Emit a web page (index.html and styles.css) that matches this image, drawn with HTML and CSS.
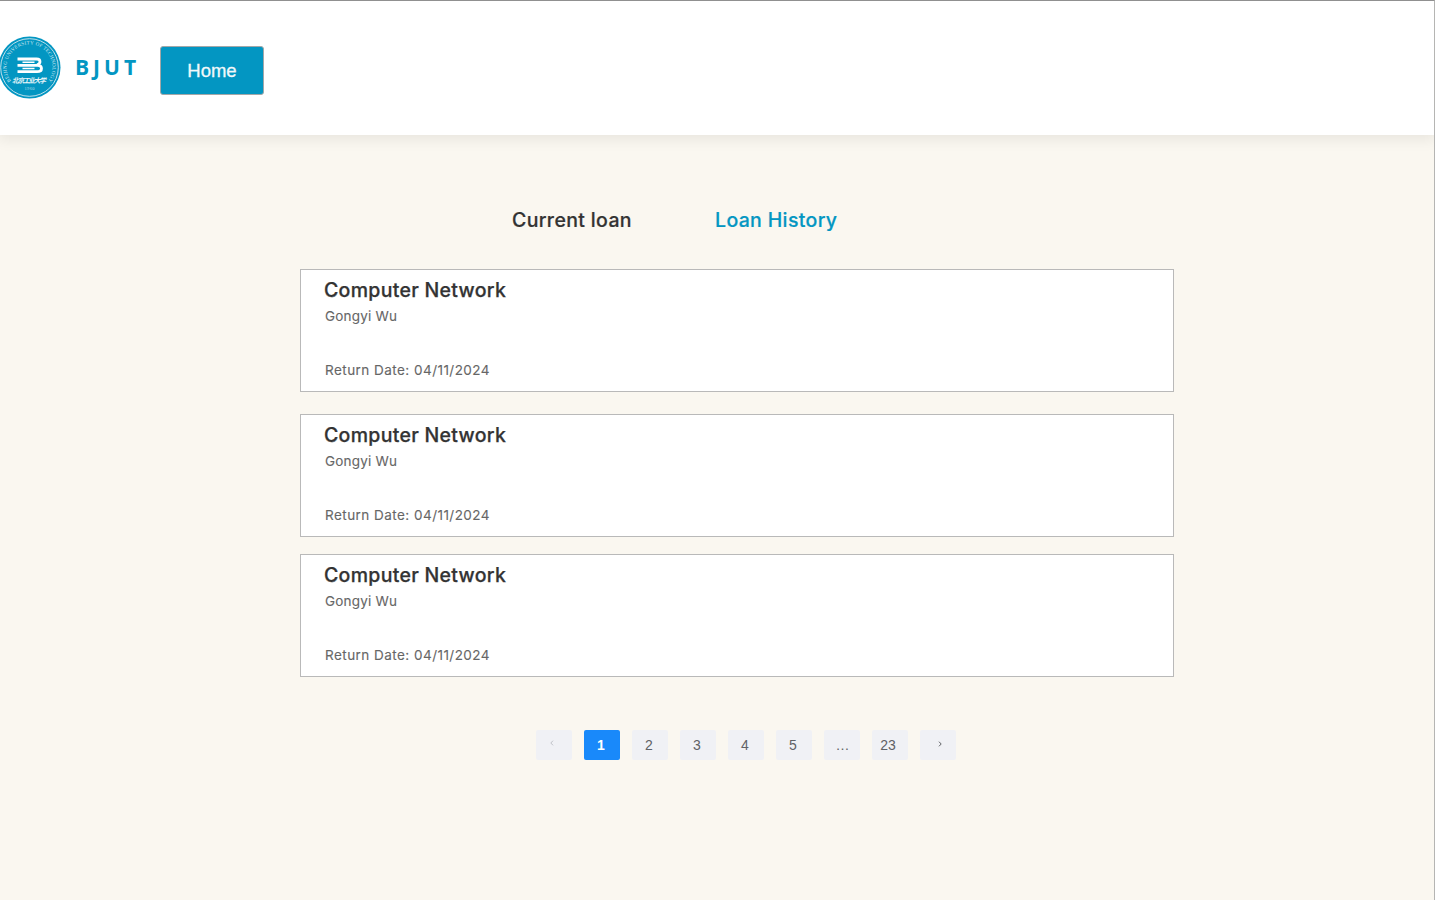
FILE: index.html
```html
<!DOCTYPE html>
<html lang="en">
<head>
<meta charset="utf-8">
<title>Loan History</title>
<link rel="stylesheet" href="styles.css">
</head>
<body>
<div class="page">
  <header class="header">
    <svg class="logo" viewBox="0 0 62 64" width="62" height="64">
      <defs>
        <path id="ring" d="M11 46A23 23 0 1 1 48 46"/>
      </defs>
      <circle cx="29.500" cy="32.500" r="31" fill="#0396c2"/>
      <circle cx="29.500" cy="32.500" r="28.800" fill="none" stroke="#d5e9ef" stroke-width=".9"/>
      <text class="logo-ring"><textPath href="#ring" textLength="101">BEIJING UNIVERSITY OF TECHNOLOGY</textPath></text>
      <g fill="none" stroke="#fff" stroke-width="2.800">
        <path d="M17.500 24H36.500Q40 24 40 26.800Q40 29.200 37 29.800"/>
        <path d="M17.500 30.300H38Q41.500 30.500 41.500 33.500Q41.500 36.700 37 36.700H17.500"/>
        <path d="M22.500 27.200H34.500M22.500 33.500H34.500" stroke-width="1.600"/>
      </g>
      <text class="logo-name" x="12" y="48.200" textLength="34">北京工业大学</text>
      <text class="logo-year" x="24.500" y="54.500" textLength="10">1960</text>
    </svg>
    <span class="brand">BJUT</span>
    <a class="home">Home</a>
  </header>
  <main class="main">
    <nav class="tabs">
      <a class="tab">Current loan</a>
      <a class="tab tab-active">Loan History</a>
    </nav>
    <section class="loans">
      <article class="card">
        <h2 class="title">Computer Network</h2>
        <p class="author">Gongyi Wu</p>
        <p class="date">Return Date: 04/11/2024</p>
      </article>
      <article class="card">
        <h2 class="title">Computer Network</h2>
        <p class="author">Gongyi Wu</p>
        <p class="date">Return Date: 04/11/2024</p>
      </article>
      <article class="card card-last">
        <h2 class="title">Computer Network</h2>
        <p class="author">Gongyi Wu</p>
        <p class="date">Return Date: 04/11/2024</p>
      </article>
    </section>
    <nav class="pager">
      <a class="cell cell-prev"><svg width="4" height="6" viewBox="0 0 4 6"><path d="M3 .7L.8 3L3 5.300" fill="none" stroke="#b9bcc2" stroke-width=".9"/></svg></a>
      <a class="cell cell-current">1</a>
      <a class="cell">2</a>
      <a class="cell">3</a>
      <a class="cell">4</a>
      <a class="cell">5</a>
      <a class="cell cell-more">…</a>
      <a class="cell cell-wide">23</a>
      <a class="cell cell-next"><svg width="4" height="6" viewBox="0 0 4 6"><path d="M1 .7L3.200 3L1 5.300" fill="none" stroke="#606266" stroke-width="1"/></svg></a>
    </nav>
  </main>
</div>
</body>
</html>
```
FILE: styles.css
```css
* { box-sizing: border-box; }
body { margin: 0; }
h2, p { margin: 0; }
.page {
  width: 1435px;
  height: 900px;
  overflow: hidden;
  background: #faf6ef;
  border-top: 1px solid #909090;
  border-right: 1px solid #b5b5b3;
  font-family: Inter, "Liberation Sans", sans-serif;
}
.page { background: #faf7f0; }
.header {
  display: flex;
  align-items: flex-start;
  height: 134px;
  background: #fff;
  box-shadow: 0 2px 14px 2px rgba(0, 0, 0, .08);
}
.logo { display: block; margin-top: 34px; }
.logo-ring { font: 5px "Liberation Serif", serif; fill: #d2e9f1; }
.logo-name { font: italic bold 6.800px "Noto Sans CJK SC", sans-serif; fill: #e8f5f9; }
.logo-year { font: 4.500px "Liberation Serif", serif; fill: #b5dce8; }
.brand {
  width: 84px;
  margin: 50px 0 0 13px;
  font: 700 21px/32px "Open Sans", sans-serif;
  letter-spacing: 4px;
  color: #0396c2;
}
.home {
  width: 104px;
  height: 49px;
  margin: 45px 0 0 1px;
  border: 1px solid #a3a7a8;
  border-radius: 3px;
  background: #0396c2;
  color: #f1f8fa;
  font: 18.500px/48px "Liberation Sans", sans-serif;
  -webkit-text-stroke: .3px;
  text-align: center;
}
.tabs { display: flex; padding: 70px 0 0 512px; }
.tab {
  width: 203px;
  font-size: 19.500px;
  font-weight: 500;
  line-height: 30px;
  letter-spacing: .35px;
  -webkit-text-stroke: .2px;
  color: #333;
  white-space: nowrap;
}
.tab-active { color: #0396c2; }
.loans {
  display: flex;
  flex-direction: column;
  width: 874px;
  margin: 34px 0 0 300px;
}
.card {
  height: 123px;
  margin-bottom: 22px;
  padding: 5px 23px;
  border: 1px solid #b9b9b9;
  background: #fff;
}
.card:nth-child(2) { margin-bottom: 17px; }
.card-last { margin-bottom: 0; }
.title {
  font-size: 19.500px;
  font-weight: 500;
  line-height: 30px;
  letter-spacing: .3px;
  -webkit-text-stroke: .25px;
  color: #333;
}
.author, .date {
  padding-left: 1px;
  font-size: 13.500px;
  line-height: 22px;
  letter-spacing: .2px;
  -webkit-text-stroke: .1px;
  color: #666;
}
.date { margin-top: 32px; letter-spacing: .46px; }
.pager { display: flex; gap: 12px; margin: 53px 0 0 536px; }
.cell {
  display: flex;
  align-items: center;
  justify-content: center;
  width: 36px;
  height: 30px;
  padding-right: 2px;
  border-radius: 2px;
  background: #f0f1f5;
  color: #606266;
  font: 14px/30px "Liberation Sans", sans-serif;
}
.cell-current { background: #1989fa; color: #fff; font-weight: 700; }
.cell-more { padding: 0 0 0 1px; }
.cell-wide { padding-right: 4px; }
.cell-prev { padding: 0 4px 4px 0; }
.cell-next { padding: 0 0 2px 4px; }
```
